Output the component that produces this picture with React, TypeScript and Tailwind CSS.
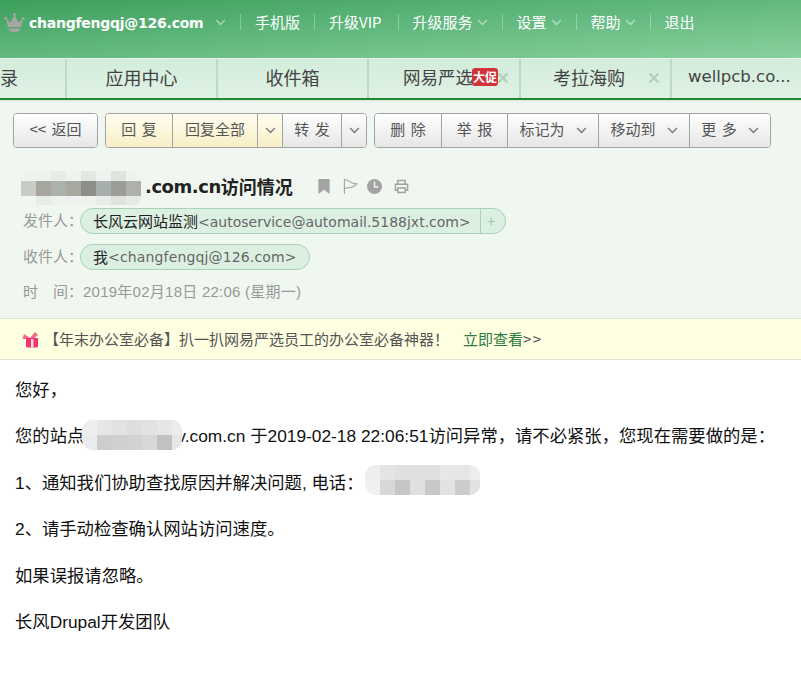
import React from 'react';

const uiFont = "font-['DejaVu_Sans','Noto_Sans_CJK_SC',sans-serif]";
const cjkFont = "font-['Noto_Sans_CJK_SC',sans-serif]";
const bodyFont = "font-['Liberation_Sans','Noto_Sans_CJK_SC',sans-serif]";

const Chevron = ({ className = 'text-white/50' }: { className?: string }) => (
  <svg viewBox="0 0 12 8" className={`w-[11px] h-[7px] shrink-0 ${className}`} fill="none" stroke="currentColor" strokeWidth="1.6">
    <path d="M1 1.2 L6 6.2 L11 1.2" />
  </svg>
);

const Divider = () => <span className="w-px h-[16px] mx-[14px] bg-white/30" />;

// blurred-out strings: rows of coloured blocks
const Mosaic = ({ rows, cell, className }: { rows: string[][]; cell: number; className?: string }) => (
  <span className={`inline-flex flex-col shrink-0 overflow-hidden align-middle ${className ?? ''}`}>
    {rows.map((row, i) => (
      <span key={i} className="flex shrink-0">
        {row.map((c, j) => (
          <span key={j} className="shrink-0" style={{ width: cell, height: cell, background: c }} />
        ))}
      </span>
    ))}
  </span>
);

const ToolBtn = ({
  label,
  w,
  chevron,
  yellow,
  first,
}: {
  label: string;
  w: string;
  chevron?: boolean;
  yellow?: boolean;
  first?: boolean;
}) => (
  <div
    className={`${w} h-full flex items-center justify-center gap-[11px] text-[15px] text-[#555] [word-spacing:2px] ${
      first ? '' : 'border-l border-[#a3a3a3]'
    } ${yellow ? 'bg-gradient-to-b from-[#fffdf0] to-[#f8efc6]' : 'bg-gradient-to-b from-white to-[#e6e6e6]'}`}
  >
    {label && <span className="-mt-[2px]">{label}</span>}
    {chevron && <Chevron className="text-[#777]" />}
  </div>
);

const Group = ({ children }: { children: React.ReactNode }) => (
  <div className="h-[35px] flex rounded-[4px] border border-[#a3a3a3] overflow-hidden">{children}</div>
);

const Tab = ({ w, children, close }: { w: string; children: React.ReactNode; close?: boolean }) => (
  <div className={`${w} h-full relative flex items-center justify-center shrink-0 pb-[3px] border-r-2 border-[#b9dcc2] text-[18px] text-[#444]`}>
    {children}
    {close && (
      <svg viewBox="0 0 10 10" className="absolute right-[11px] top-[14px] w-[10px] h-[10px] text-[#b0d0ba]" fill="none" stroke="currentColor" strokeWidth="2.2">
        <path d="M0.5 0.5 L9.5 9.5 M9.5 0.5 L0.5 9.5" />
      </svg>
    )}
  </div>
);

const Label = ({ children }: { children: React.ReactNode }) => (
  <span className="w-[57px] shrink-0 text-[15px] text-[#999] whitespace-nowrap -mt-[1px]">{children}</span>
);

const Line = ({ children, className }: { children: React.ReactNode; className?: string }) => (
  <p className={`h-[24px] leading-[24px] text-[17.33px] text-[#111] whitespace-nowrap ${className ?? ''}`}>{children}</p>
);

export default function App() {
  return (
    <div className={`w-[801px] h-[678px] overflow-hidden bg-white ${uiFont}`}>
      {/* top bar */}
      <div className="h-[58px] pt-[12px] pl-[4px] flex items-start bg-gradient-to-br from-[#3c9f5c] via-[#62b97f] to-[#8ad09e]">
        <div className={`h-[20px] flex items-center text-white text-[15px] whitespace-nowrap ${cjkFont}`}>
          <svg viewBox="0 0 21 21" className="w-[21px] h-[21px] mt-[2px] text-[#a8a5a5]" fill="currentColor">
            <circle cx="1.8" cy="5.5" r="1.5" />
            <circle cx="10.5" cy="1.5" r="1.5" />
            <circle cx="19.2" cy="5.5" r="1.5" />
            <path d="M2 6 L6.5 9.5 L10.5 2 L14.5 9.5 L19 6 L17 14 H4 Z" />
            <path d="M4 16 C6 20 15 20 17 16 V15.5 C14 18 7 18 4 15.5 Z" />
            <path d="M5 15.5 H16 C14.5 20.5 6.5 20.5 5 15.5 Z" />
          </svg>
          <span className={`ml-[4px] w-[186px] font-bold text-[14px] tracking-[-0.25px] mt-[2px] ${uiFont}`}>changfengqj@126.com</span>
          <Chevron />
          <Divider />
          <span>手机版</span>
          <Divider />
          <span className="mr-[2px]">升级VIP</span>
          <Divider />
          <span>升级服务</span>
          <span className="ml-[4px]"><Chevron /></span>
          <Divider />
          <span>设置</span>
          <span className="ml-[4px]"><Chevron /></span>
          <Divider />
          <span>帮助</span>
          <span className="ml-[4px]"><Chevron /></span>
          <Divider />
          <span>退出</span>
        </div>
      </div>

      {/* tab strip */}
      <div className={`h-[40px] border-t border-[#e6f3ea] flex bg-gradient-to-b from-[#d3ecdb] to-[#dff2e5] ${cjkFont}`}>
        <Tab w="w-[67px] !justify-start">录</Tab>
        <Tab w="w-[151px]">应用中心</Tab>
        <Tab w="w-[151px]">收件箱</Tab>
        <Tab w="w-[152px] !justify-start pl-[34px]" close>
          <span className="text-[17.5px] whitespace-nowrap">网易严选</span>
          <span className="absolute left-[103px] top-[9px] w-[26px] h-[18px] rounded-[3px] bg-[#d0343a] text-white text-[12px] leading-[17px] text-center font-bold">大促</span>
        </Tab>
        <Tab w="w-[151px]" close>
          <span className="-ml-[13px]">考拉海购</span>
        </Tab>
        <div className={`flex-1 flex items-center pl-[16px] pb-[3px] text-[16.5px] text-[#444] ${uiFont}`}>wellpcb.co...</div>
      </div>
      <div className="h-[2px] bg-[#1f8a33]" />

      <div className={`h-[219px] border-b border-[#dde3dd] bg-[#f0f7f0] ${cjkFont}`}>
        {/* toolbar */}
        <div className="h-[13px] bg-gradient-to-b from-[#dfe8e0] to-[#f0f7f0] [background-size:100%_3px] bg-no-repeat" />
        <div className="flex pl-[13px] gap-[7px]">
          <Group>
            <ToolBtn first w="w-[83px]" label="<< 返回" />
          </Group>
          <Group>
            <ToolBtn first yellow w="w-[66px]" label="回 复" />
            <ToolBtn yellow w="w-[85px]" label="回复全部" />
            <ToolBtn yellow w="w-[25px]" label="" chevron />
            <ToolBtn w="w-[59px]" label="转 发" />
            <ToolBtn w="w-[25px]" label="" chevron />
          </Group>
          <Group>
            <ToolBtn first w="w-[66px]" label="删 除" />
            <ToolBtn w="w-[66px]" label="举 报" />
            <ToolBtn w="w-[91px]" label="标记为" chevron />
            <ToolBtn w="w-[91px]" label="移动到" chevron />
            <ToolBtn w="w-[81px]" label="更 多" chevron />
          </Group>
        </div>

        {/* subject and addresses */}
        <div className="pl-[23px]">
          <div className="mt-[26px] h-[24px] flex items-center">
            <Mosaic
              className="-ml-[2px] h-[34px] justify-center -mt-[3px] -mb-[7px] rounded-[8px]"
              cell={15}
              rows={[
                ['#eef3ee', '#eef3ee', '#e8ece8', '#eef3ee', '#e4e8e4', '#eef3ee', '#e0e4e0', '#eef3ee'],
                ['#c8ccc6', '#a6a69f', '#aab2ae', '#a8a8a1', '#8e8e88', '#a6aeae', '#9c9c96', '#b0b0aa'],
                ['#f0f6f0', '#e8ece8', '#eef2ee', '#eef2ee', '#eef3ee', '#e8ece8', '#dfe3df', '#e6eae6'],
              ]}
            />
            <span className={`ml-[4px] text-[18px] font-bold text-[#222] ${uiFont} tracking-[-0.45px]`}>.com.cn</span>
            <span className="text-[18px] font-bold text-[#222]">访问情况</span>
            <div className="flex items-center ml-[24px] text-[#a3a3a3]">
              <svg viewBox="0 0 14 16" className="w-[14px] h-[15px]" fill="currentColor"><path d="M1 0 H13 V16 L7 11.5 L1 16 Z" /></svg>
              <svg viewBox="0 0 16 16" className="w-[15px] h-[15px] ml-[12px]" fill="none" stroke="currentColor" strokeWidth="1.2"><path d="M1.5 0 V16 M1.5 1 C5 0 7 3 9 4 C11 5 13 5 15 5 C13 7 11 9 8 9 C5 9 4 10 1.5 10" /></svg>
              <svg viewBox="0 0 16 16" className="w-[15px] h-[15px] ml-[9px]"><circle cx="8" cy="8" r="8" fill="currentColor" /><path d="M8 3 V8.5 H12" fill="none" stroke="#f0f7f0" strokeWidth="1.5" /></svg>
              <svg viewBox="0 0 16 16" className="w-[15px] h-[15px] ml-[12px]" fill="none" stroke="currentColor" strokeWidth="1.6"><path d="M4 5 V1.5 H12 V5 M4 12 H1.5 V5.5 H14.5 V12 H12 M4 9.5 H12 V14.5 H4 Z" /></svg>
            </div>
          </div>

          <div className="mt-[10px] h-[26px] flex items-center">
            <Label>发件人：</Label>
            <div className="h-[26px] flex items-center rounded-full border border-[#a9d1b5] bg-[#dcf0e2]">
              <span className="pl-[12px] pr-[9px] text-[15px] text-[#222] whitespace-nowrap">
                长风云网站监测<span className={`text-[#666] text-[14px] ${uiFont}`}>&lt;autoservice@automail.5188jxt.com&gt;</span>
              </span>
              <span className="w-[25px] h-full border-l border-[#a9d1b5] text-[#a3cfae] text-[16px] leading-[22px] pl-[6px]">+</span>
            </div>
          </div>
          <div className="mt-[10px] h-[26px] flex items-center">
            <Label>收件人：</Label>
            <div className="h-[26px] flex items-center rounded-full border border-[#a9d1b5] bg-[#dcf0e2] text-[15px] px-[12px] text-[#222] whitespace-nowrap">
              我<span className={`text-[#666] text-[14px] tracking-[0.15px] ${uiFont}`}>&lt;changfengqj@126.com&gt;</span>
            </div>
          </div>
          <div className={`mt-[9px] h-[26px] flex items-center text-[15px] text-[#999] whitespace-nowrap ${bodyFont}`}>
            <span className="w-[60px] shrink-0">时　间：</span>
            <span className="tracking-[0.25px]">2019年02月18日 22:06 (星期一)</span>
          </div>
        </div>
      </div>

      {/* promo strip */}
      <div className={`h-[41px] bg-[#fefee0] border-b border-[#e0e0d0] flex items-center pl-[22px] text-[15px] text-[#555] whitespace-nowrap ${cjkFont}`}>
        <svg viewBox="0 0 17 17" className="w-[17px] h-[17px]">
          <path d="M4 7 H16 V15 C16 16 15 16.5 14 16.5 H6 C5 16.5 4 16 4 15 Z" fill="#f0366a" />
          <path d="M2 3 L8 7 L13 1 L16 4 L11 8 H3 L0.5 8 Z" fill="#f0366a" opacity="0.75" />
          <rect x="9" y="8" width="2.5" height="8.5" fill="#ffd5e0" />
        </svg>
        <span className="ml-[5px]">【年末办公室必备】扒一扒网易严选员工的办公室必备神器！</span>
        <span className="ml-[14px] text-[#2c7a3f] [&>i]:not-italic">
          立即查看<i className="text-[#555] tracking-[1.5px]">&gt;&gt;</i>
        </span>
      </div>

      {/* message body */}
      <div className={`pl-[15px] pt-[18px] ${bodyFont}`}>
        <Line>您好，</Line>
        <Line className="mt-[22.4px] flex items-center">
          您的站点
          <Mosaic
            className="relative z-10 w-[100px] -ml-[2px] -mr-[5px] -mt-[4px] -mb-[2px] rounded-[10px]"
            cell={15}
            rows={[
              ['#eeeeee', '#e6e6e6', '#e2e2e2', '#dedede', '#e2e2e2', '#e6e6e6', '#ececec'],
              ['#e8ecef', '#cfcccc', '#cfcfcf', '#d2d2d2', '#d8d8d8', '#c2c0c0', '#e6e6e6'],
            ]}
          />
          <span>v.com.cn 于2019-02-18 22:06:51访问异常，请不必紧张，您现在需要做的是：</span>
        </Line>
        <Line className="mt-[22.4px] flex items-center">
          1、通知我们协助查找原因并解决问题, 电话：
          <Mosaic
            className="ml-[1px] w-[115px] -mt-[6px] rounded-[10px]"
            cell={15}
            rows={[
              ['#eeeeee', '#e4e4e4', '#e0e0e0', '#e0e0e0', '#e0e0e0', '#e6e8e8', '#e6e6e6', '#eeeeee'],
              ['#f0f0f0', '#d8d8d8', '#c6c6c6', '#e0e0e0', '#c8c8c8', '#e4e2e0', '#cccccc', '#e2e2e2'],
            ]}
          />
        </Line>
        <Line className="mt-[22.4px]">2、请手动检查确认网站访问速度。</Line>
        <Line className="mt-[22.4px]">如果误报请忽略。</Line>
        <Line className="mt-[22.4px]">长风Drupal开发团队</Line>
      </div>
    </div>
  );
}
